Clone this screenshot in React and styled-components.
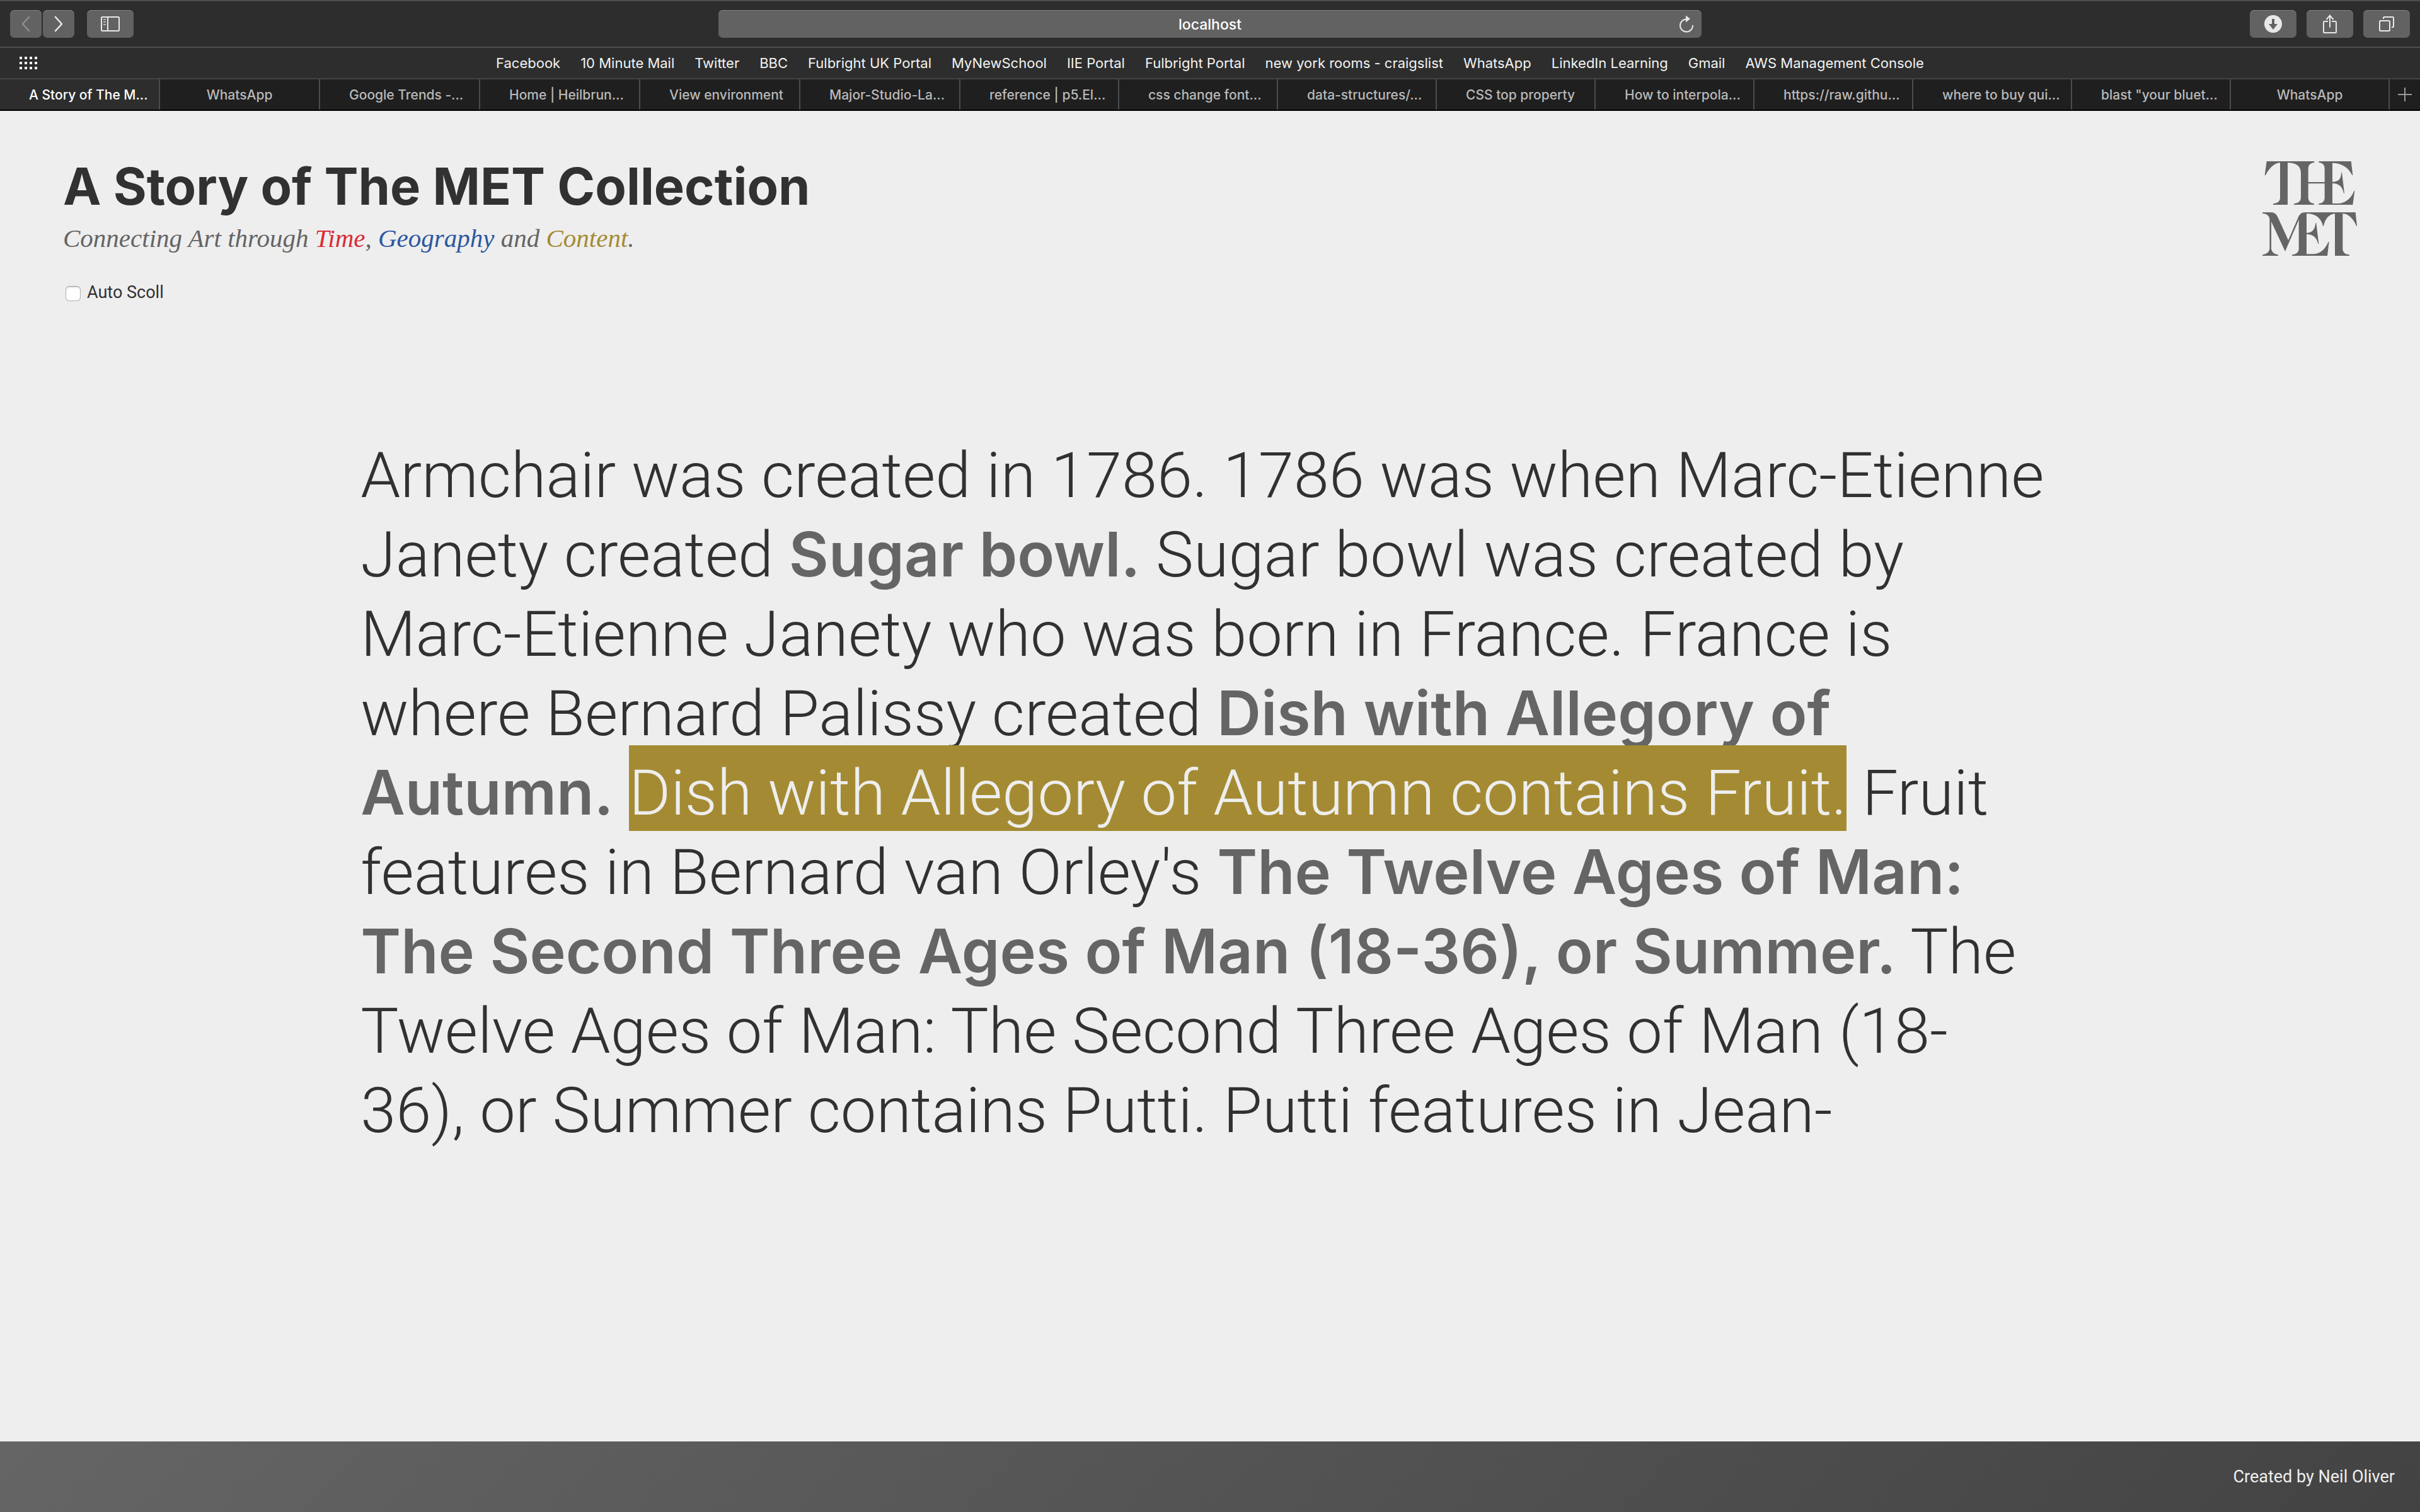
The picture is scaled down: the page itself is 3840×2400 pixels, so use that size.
import React from "react";
import styled, { createGlobalStyle } from "styled-components";

const GlobalStyle = createGlobalStyle`
  *, *::before, *::after { box-sizing: border-box; }
  body { margin: 0; background: #eeeeee; }
`;

const uiFont = `Inter, "Liberation Sans", sans-serif`;
const bodyFont = `Roboto, "Liberation Sans", sans-serif`;

const Page = styled.div`
  display: flex;
  flex-direction: column;
  min-height: 100vh;
  background: #eeeeee;
  color: #313131;
  font-family: ${bodyFont};
`;

/* Browser window */

const Browser = styled.header`
  border-top: 2px solid #4e4e4e;
  border-bottom: 2px solid #000000;
  background: #2d2d2d;
  font-family: ${uiFont};
`;

const Toolbar = styled.div`
  display: grid;
  grid-template-columns: 1fr minmax(0, 1560px) 1fr;
  align-items: center;
  height: 74px;
  padding: 0 16px;
  border-bottom: 2px solid #4e4e4e;
`;

const ButtonGroup = styled.div`
  display: flex;
  justify-content: ${(p) => (p.$end ? "flex-end" : "flex-start")};
  gap: ${(p) => p.$gap}px;
`;

const ToolButton = styled.button`
  display: flex;
  align-items: center;
  justify-content: center;
  width: ${(p) => (p.$narrow ? 50 : 74)}px;
  height: 44px;
  padding: 0;
  border: 0;
  border-radius: 7px;
  background: #626262;
  box-shadow: inset 0 1px 0 #808080;
  color: #e8e8e8;

  &:disabled { color: #8d8d8d; }
`;

const AddressBar = styled.div`
  display: grid;
  grid-template-columns: 44px 1fr 44px;
  align-items: center;
  height: 44px;
  border-radius: 7px;
  background: #626262;
  box-shadow: inset 0 1px 0 #808080;
`;

const AddressInput = styled.input`
  grid-column: 2;
  width: 100%;
  padding: 2px 0 0;
  border: 0;
  background: transparent;
  color: #ffffff;
  font: 500 23px/32px ${uiFont};
  text-align: center;
`;

const ReloadButton = styled.button`
  display: flex;
  padding: 0 0 0 7px;
  border: 0;
  background: transparent;
  color: #e8e8e8;
`;

const Bookmarks = styled.nav`
  display: grid;
  grid-template-columns: 60px 1fr 60px;
  align-items: center;
  height: 50px;
  padding: 0 30px;
  border-bottom: 2px solid #444444;
`;

const GridButton = styled.button`
  display: flex;
  padding: 0;
  border: 0;
  background: transparent;
  color: #f2f2f2;
`;

const BookmarkList = styled.div`
  display: flex;
  justify-content: center;
  gap: 32px;
`;

const Bookmark = styled.a`
  color: #f2f2f2;
  font-size: 22px;
  font-weight: 400;
  line-height: 28px;
  text-decoration: none;
  white-space: nowrap;
`;

const Tabs = styled.nav`
  display: flex;
  height: 48px;
  background: #1f1f1f;
`;

const Tab = styled.a`
  flex: ${(p) => (p.$wide ? 252 : 250)} 1 0;
  min-width: 0;
  overflow: hidden;
  border-right: 2px solid #4c4c4c;
  background: ${(p) => (p.$active ? "#2d2d2d" : "#1f1f1f")};
  color: ${(p) => (p.$active ? "#ffffff" : "#b9b9b9")};
  font-size: 21px;
  font-weight: 500;
  line-height: 50px;
  text-decoration: none;
  white-space: nowrap;
`;

const TabTitle = styled.span`
  display: block;
  padding-left: ${(p) => (p.$centered ? 0 : 46)}px;
  text-align: ${(p) => (p.$centered ? "center" : "left")};
`;

const NewTab = styled.button`
  display: flex;
  align-items: center;
  justify-content: center;
  width: 48px;
  padding: 0;
  border: 0;
  background: transparent;
  color: #9a9a9a;
`;

/* Story page */

const Masthead = styled.section`
  display: flex;
  align-items: flex-start;
  justify-content: space-between;
  padding: 72px 100px 0;
`;

const Title = styled.h1`
  margin: 0;
  font: 700 81px/96px ${uiFont};
`;

const Subtitle = styled.p`
  margin: 8px 0 0;
  color: #646464;
  font: italic 41px/52px "Liberation Serif", serif;
`;

const Keyword = styled.span`
  color: ${(p) => p.$color};
`;

const AutoScroll = styled.label`
  display: flex;
  align-items: center;
  gap: 10px;
  margin-top: 42px;
  padding-left: 4px;
  font-size: 27px;
  font-weight: 400;
  line-height: 36px;
`;

const Checkbox = styled.input`
  appearance: none;
  width: 24px;
  height: 24px;
  margin: 4px 0 0;
  border: 1px solid #b4b4b4;
  border-top-color: #989898;
  border-radius: 6px;
  background: #ffffff;
  box-shadow: inset 0 2px 2px #e4e4e4;
`;

const LogoLink = styled.a`
  display: flex;
  margin: 8px 0 0;
  color: #656565;
`;

const Story = styled.main`
  flex: 1;
  padding: 210px 14.9%;
`;

const StoryText = styled.p`
  margin: 0;
  font-size: 101px;
  font-weight: 300;
  line-height: 126px;
  white-space: nowrap;
`;

const Artwork = styled.b`
  color: #656565;
  font-family: ${uiFont};
  font-size: 97px;
  font-weight: 600;
  line-height: 96px;
`;

const Highlight = styled.mark`
  padding: 16px 0 1px;
  background: #a48b33;
  color: #eeeeee;
`;

const Footer = styled.footer`
  display: flex;
  align-items: center;
  justify-content: flex-end;
  height: 112px;
  padding: 0 40px;
  background: linear-gradient(135deg, #656565, #434343);
  color: #eeeeee;
  font-size: 27px;
  font-weight: 400;
  line-height: 36px;
`;

const bookmarks = [
  "Facebook", "10 Minute Mail", "Twitter", "BBC", "Fulbright UK Portal", "MyNewSchool",
  "IIE Portal", "Fulbright Portal", "new york rooms - craigslist", "WhatsApp",
  "LinkedIn Learning", "Gmail", "AWS Management Console",
];

const tabs = [
  "A Story of The M...", "WhatsApp", "Google Trends -...", "Home | Heilbrun...",
  "View environment", "Major-Studio-La...", "reference | p5.El...", "css change font...",
  "data-structures/...", "CSS top property", "How to interpola...", "https://raw.githu...",
  "where to buy qui...", "blast \"your bluet...", "WhatsApp",
];

const Chevron = ({ d }) => (
  <svg width="16" height="26" viewBox="0 0 16 26" fill="none" stroke="currentColor" strokeWidth="2.6" strokeLinecap="round" strokeLinejoin="round" aria-hidden="true">
    <path d={d} />
  </svg>
);

const SidebarIcon = () => (
  <svg width="30" height="24" viewBox="0 0 30 24" fill="none" stroke="currentColor" strokeWidth="2" aria-hidden="true">
    <rect x="1" y="1" width="28" height="22" rx="1.5" />
    <path d="M11 1v22" />
    <path d="M4 5h4M4 9h4M4 13h4" stroke="#b4b4b4" />
  </svg>
);

const ReloadIcon = () => (
  <svg width="26" height="28" viewBox="0 0 26 28" fill="none" stroke="currentColor" strokeWidth="2" aria-hidden="true">
    <path d="M13 6.5a10 10 0 1 0 10 9.5" />
    <path d="M12 .5v11l7-5.5z" fill="currentColor" stroke="none" />
  </svg>
);

const DownloadIcon = () => (
  <svg width="28" height="28" viewBox="0 0 28 28" aria-hidden="true">
    <circle cx="14" cy="14" r="14" fill="currentColor" />
    <path d="M12 6h4v8h5l-7 9-7-9h5z" fill="#626262" />
  </svg>
);

const ShareIcon = () => (
  <svg width="22" height="32" viewBox="0 0 22 32" fill="none" stroke="currentColor" strokeWidth="2" aria-hidden="true">
    <path d="M8 12H2.5Q1 12 1 13.5v15Q1 30 2.5 30h17q1.5 0 1.5-1.5v-15Q21 12 19.5 12H14" />
    <path d="M11 21.5V2.5M5.5 9 11 2.5 16.5 9" />
  </svg>
);

const TabsIcon = () => (
  <svg width="24" height="24" viewBox="0 0 24 24" fill="none" stroke="currentColor" strokeWidth="2" aria-hidden="true">
    <rect x="1" y="7" width="16" height="16" rx="1.5" />
    <path d="M7 4V2.5Q7 1 8.5 1h13Q23 1 23 2.5v13Q23 17 21.5 17H20" />
  </svg>
);

const GridIcon = () => (
  <svg width="30" height="20" viewBox="0 0 30 20" fill="currentColor" aria-hidden="true">
    {[0, 8, 16].flatMap((y) => [1, 9, 17, 25].map((x) => <rect key={`${x}-${y}`} x={x} y={y} width="4" height="4" />))}
  </svg>
);

const PlusIcon = () => (
  <svg width="22" height="22" viewBox="0 0 22 22" fill="none" stroke="currentColor" strokeWidth="2" aria-hidden="true">
    <path d="M11 0v22M0 11h22" />
  </svg>
);

const MetLogo = () => (
  <svg width="150" height="150" viewBox="150 108 450 450" fill="currentColor" role="img" aria-label="The Met">
    <path d="M170 108H397V114C378 116 368 125 368 145V207H446V145C446 125 438 116 418 114V108H572L580 174H577C560 140 530 116 483 116V206C512 206 524 195 526 160H528L540 260H537C530 225 510 213 483 213V309H515C550 305 575 280 586 249H589L580 315H418V310C438 308 446 297 446 280V214H368V280C368 297 378 308 396 310V315H300V310C322 308 333 297 333 280V165C333 130 310 115 270 115V315H201V310C225 308 234 298 234 280V115C205 115 180 145 165 174H161Z" />
    <path d="M150 351H190C207 351 216 360 222 372L273 484L318 380C326 360 335 351 355 351H593L600 416H597C585 385 560 357 532 357V525C532 542 545 552 564 553V558H495V357C465 360 447 385 441 416H438C430 380 405 357 360 357V449C385 449 400 435 403 402H406L418 501H415C408 470 390 455 360 455V550H392C430 548 452 520 464 491H467L459 558H291V553C312 551 323 540 323 525V387L258 537L192 395V525C195 542 208 550 225 553V558H150V553C168 550 181 542 184 525V380C180 365 168 357 150 356Z" />
  </svg>
);

export default function App() {
  return (
    <Page>
      <GlobalStyle />
      <Browser>
        <Toolbar>
          <ButtonGroup $gap={20}>
            <ButtonGroup $gap={2}>
              <ToolButton $narrow disabled aria-label="Back"><Chevron d="M13 2 3 13l10 11" /></ToolButton>
              <ToolButton $narrow aria-label="Forward"><Chevron d="M3 2l10 11L3 24" /></ToolButton>
            </ButtonGroup>
            <ToolButton aria-label="Sidebar"><SidebarIcon /></ToolButton>
          </ButtonGroup>
          <AddressBar>
            <AddressInput aria-label="Address" defaultValue="localhost" />
            <ReloadButton aria-label="Reload"><ReloadIcon /></ReloadButton>
          </AddressBar>
          <ButtonGroup $gap={16} $end>
            <ToolButton aria-label="Downloads"><DownloadIcon /></ToolButton>
            <ToolButton aria-label="Share"><ShareIcon /></ToolButton>
            <ToolButton aria-label="Tab overview"><TabsIcon /></ToolButton>
          </ButtonGroup>
        </Toolbar>
        <Bookmarks>
          <GridButton aria-label="Favourites"><GridIcon /></GridButton>
          <BookmarkList>
            {bookmarks.map((name) => <Bookmark key={name} href="#">{name}</Bookmark>)}
          </BookmarkList>
        </Bookmarks>
        <Tabs>
          {tabs.map((name, i) => (
            <Tab key={i} href="#" $wide={i < 6} $active={i === 0}>
              <TabTitle $centered={name === "WhatsApp"}>{name}</TabTitle>
            </Tab>
          ))}
          <NewTab aria-label="New tab"><PlusIcon /></NewTab>
        </Tabs>
      </Browser>

      <Masthead>
        <div>
          <Title>A Story of The MET Collection</Title>
          <Subtitle>
            Connecting Art through <Keyword $color="#d92b35">Time</Keyword>,{" "}
            <Keyword $color="#2c57a0">Geography</Keyword> and <Keyword $color="#a48b33">Content</Keyword>.
          </Subtitle>
          <AutoScroll>
            <Checkbox type="checkbox" />
            Auto Scoll
          </AutoScroll>
        </div>
        <LogoLink href="#"><MetLogo /></LogoLink>
      </Masthead>

      <Story>
        <StoryText>
          Armchair was created in 1786. 1786 was when Marc-Etienne<br />
          Janety created <Artwork>Sugar bowl.</Artwork> Sugar bowl was created by<br />
          Marc-Etienne Janety who was born in France. France is<br />
          where Bernard Palissy created <Artwork>Dish with Allegory of<br />
          Autumn.</Artwork> <Highlight>Dish with Allegory of Autumn contains Fruit.</Highlight> Fruit<br />
          features in Bernard van Orley's <Artwork>The Twelve Ages of Man:<br />
          The Second Three Ages of Man (18-36), or Summer.</Artwork> The<br />
          Twelve Ages of Man: The Second Three Ages of Man (18-<br />
          36), or Summer contains Putti. Putti features in Jean-
        </StoryText>
      </Story>

      <Footer>Created by Neil Oliver</Footer>
    </Page>
  );
}
